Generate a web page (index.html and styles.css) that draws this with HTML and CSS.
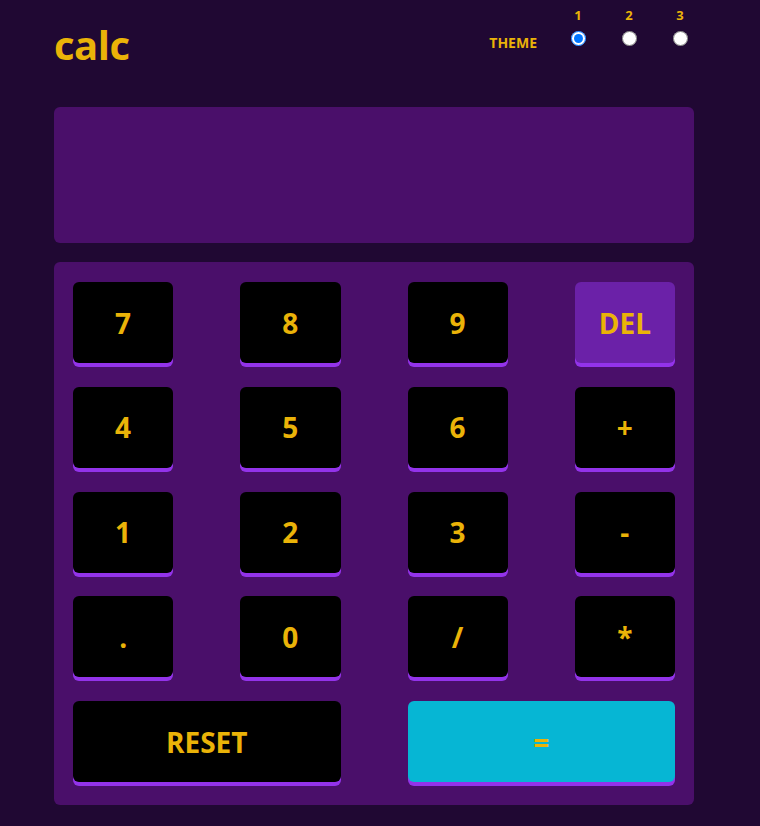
FILE: index.html
```html
<!DOCTYPE html>
<html>
<head>
<meta charset="utf-8">
<link rel="stylesheet" href="styles.css">
</head>
<body>
<main class="calc">
  <header class="top">
    <h1 class="logo">calc</h1>
    <div class="theme">
      <span class="theme-label">THEME</span>
      <div class="theme-opts">
        <label class="opt"><span class="opt-num">1</span><input type="radio" name="t" checked></label>
        <label class="opt"><span class="opt-num">2</span><input type="radio" name="t"></label>
        <label class="opt"><span class="opt-num">3</span><input type="radio" name="t"></label>
      </div>
    </div>
  </header>
  <div class="screen"></div>
  <div class="pad">
    <button class="key">7</button>
    <button class="key">8</button>
    <button class="key">9</button>
    <button class="key key-del">DEL</button>
    <button class="key">4</button>
    <button class="key">5</button>
    <button class="key">6</button>
    <button class="key">+</button>
    <button class="key">1</button>
    <button class="key">2</button>
    <button class="key">3</button>
    <button class="key">-</button>
    <button class="key">.</button>
    <button class="key">0</button>
    <button class="key">/</button>
    <button class="key">*</button>
    <button class="key key-wide">RESET</button>
    <button class="key key-wide key-eq">=</button>
  </div>
</main>
</body>
</html>
```
FILE: styles.css
```css
html, body {
  margin: 0;
  padding: 0;
  background: #200833;
  font-family: "Open Sans", "Noto Sans", sans-serif;
}
.calc {
  width: 640px;
  margin-left: 54px;
}
.top {
  height: 107px;
  display: flex;
  justify-content: space-between;
  align-items: flex-start;
}
.logo {
  margin: 21px 0 0 0;
  font-size: 40px;
  font-weight: 700;
  color: #eab308;
  letter-spacing: -0.5px;
  line-height: 1.2;
}
.theme {
  display: flex;
  align-items: flex-end;
  gap: 31px;
  margin-top: 6px;
  padding-right: 4px;
}
.theme-label {
  font-size: 14px;
  font-weight: 700;
  color: #eab308;
  line-height: 18px;
  margin-bottom: -6px;
}
.theme-opts {
  display: flex;
  gap: 31px;
}
.opt {
  width: 20px;
  display: flex;
  flex-direction: column;
  align-items: center;
  gap: 7px;
}
.opt-num {
  font-size: 13px;
  font-weight: 700;
  color: #eab308;
  line-height: 18px;
}
.opt input {
  margin: 0;
  width: 15px;
  height: 15px;
}
.screen {
  height: 136px;
  background: #4a0f6a;
  border-radius: 6px;
  margin-bottom: 19px;
}
.pad {
  background: #4a0f6a;
  border-radius: 6px;
  padding: 20px 19px 19px 19px;
  display: grid;
  grid-template-columns: repeat(4, 1fr);
  column-gap: 67px;
  row-gap: 19.75px;
}
.key {
  height: 81px;
  margin-bottom: 4px;
  border: none;
  border-radius: 6px;
  background: #000;
  color: #eab308;
  font-family: "Open Sans", "Noto Sans", sans-serif;
  font-size: 28px;
  font-weight: 700;
  box-shadow: 0 4px 0 #9333ea;
  padding: 0;
  cursor: pointer;
}
.key-del {
  background: #6b21a8;
}
.key-wide {
  grid-column: span 2;
}
.key-eq {
  background: #06b6d4;
}
```
